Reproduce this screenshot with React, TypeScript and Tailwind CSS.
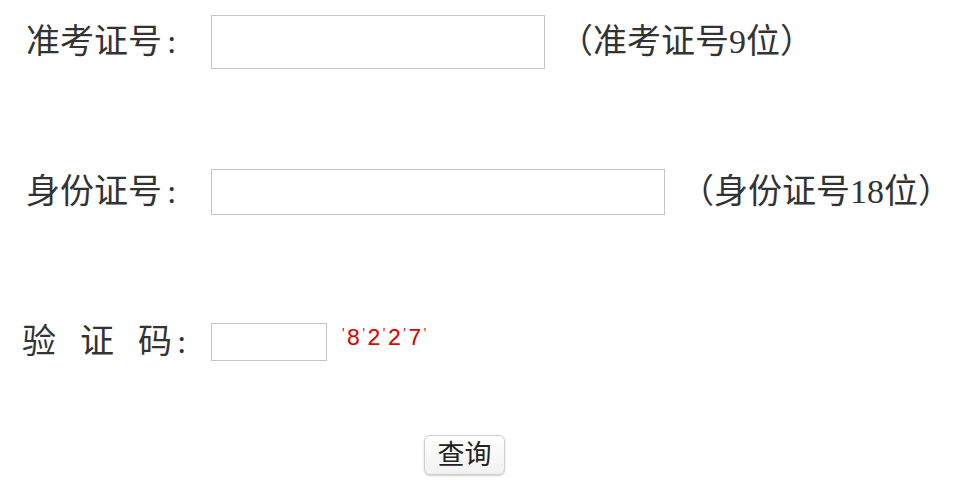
const labelFont = "font-['Liberation_Serif','Noto_Sans_CJK_SC',serif]";

const captcha = ["8", "2", "2", "7"];

const QueryPage = () => {
  return (
    <div className={`w-[956px] h-[482px] bg-white text-[#333] ${labelFont} pt-[15px]`}>
      {/* row 1 */}
      <div className="flex items-center h-[54px]">
        <div className="w-[211px] shrink-0 pl-[26px] text-[34px] leading-none">
          准考证号<span className="ml-[5px]">:</span>
        </div>
        <input
          className="w-[334px] shrink-0 h-[54px] border border-[#c4c4c4] outline-0"
          type="text"
        />
        <div className="ml-[14px] text-[34px] leading-none whitespace-nowrap">（准考证号9位）</div>
      </div>

      {/* row 2 */}
      <div className="flex items-center h-[46px] mt-[100px]">
        <div className="w-[211px] shrink-0 pl-[26px] text-[34px] leading-none">
          身份证号<span className="ml-[5px]">:</span>
        </div>
        <input
          className="w-[454px] shrink-0 h-[46px] border border-[#c4c4c4] outline-0"
          type="text"
        />
        <div className="ml-[15px] text-[34px] leading-none whitespace-nowrap">（身份证号18位）</div>
      </div>

      {/* row 3 */}
      <div className="flex items-center h-[38px] mt-[108px]">
        <div className="w-[211px] shrink-0 pl-[22px] text-[34px] leading-none flex gap-[24px]">
          <span>验</span>
          <span>证</span>
          <span>
            码<span className="ml-[5px]">:</span>
          </span>
        </div>
        <input
          className="w-[116px] shrink-0 h-[38px] border border-[#c4c4c4] outline-0"
          type="text"
        />
        {/* captcha image stand-in */}
        <div className="ml-[13px] mt-[-6px] flex items-start text-[#e00000] font-['Liberation_Mono',monospace] leading-none">
          {captcha.map((d, i) => (
            <span key={i} className="flex items-start">
              <span className="text-[11px]">'</span>
              <span className="text-[23px]">{d}</span>
            </span>
          ))}
          <span className="text-[11px]">'</span>
        </div>
      </div>

      <div className="mt-[74px] pl-[424px]">
        <button
          type="button"
          className="w-[81px] h-[40px] rounded-[6px] border border-[#cfcfcf] bg-gradient-to-b from-white to-[#f1f1f1] shadow-[0_1px_2px_rgba(0,0,0,0.2)] text-[27px] leading-none text-[#222]"
        >
          查询
        </button>
      </div>
    </div>
  );
};

export default function App() {
  return <QueryPage />;
}
